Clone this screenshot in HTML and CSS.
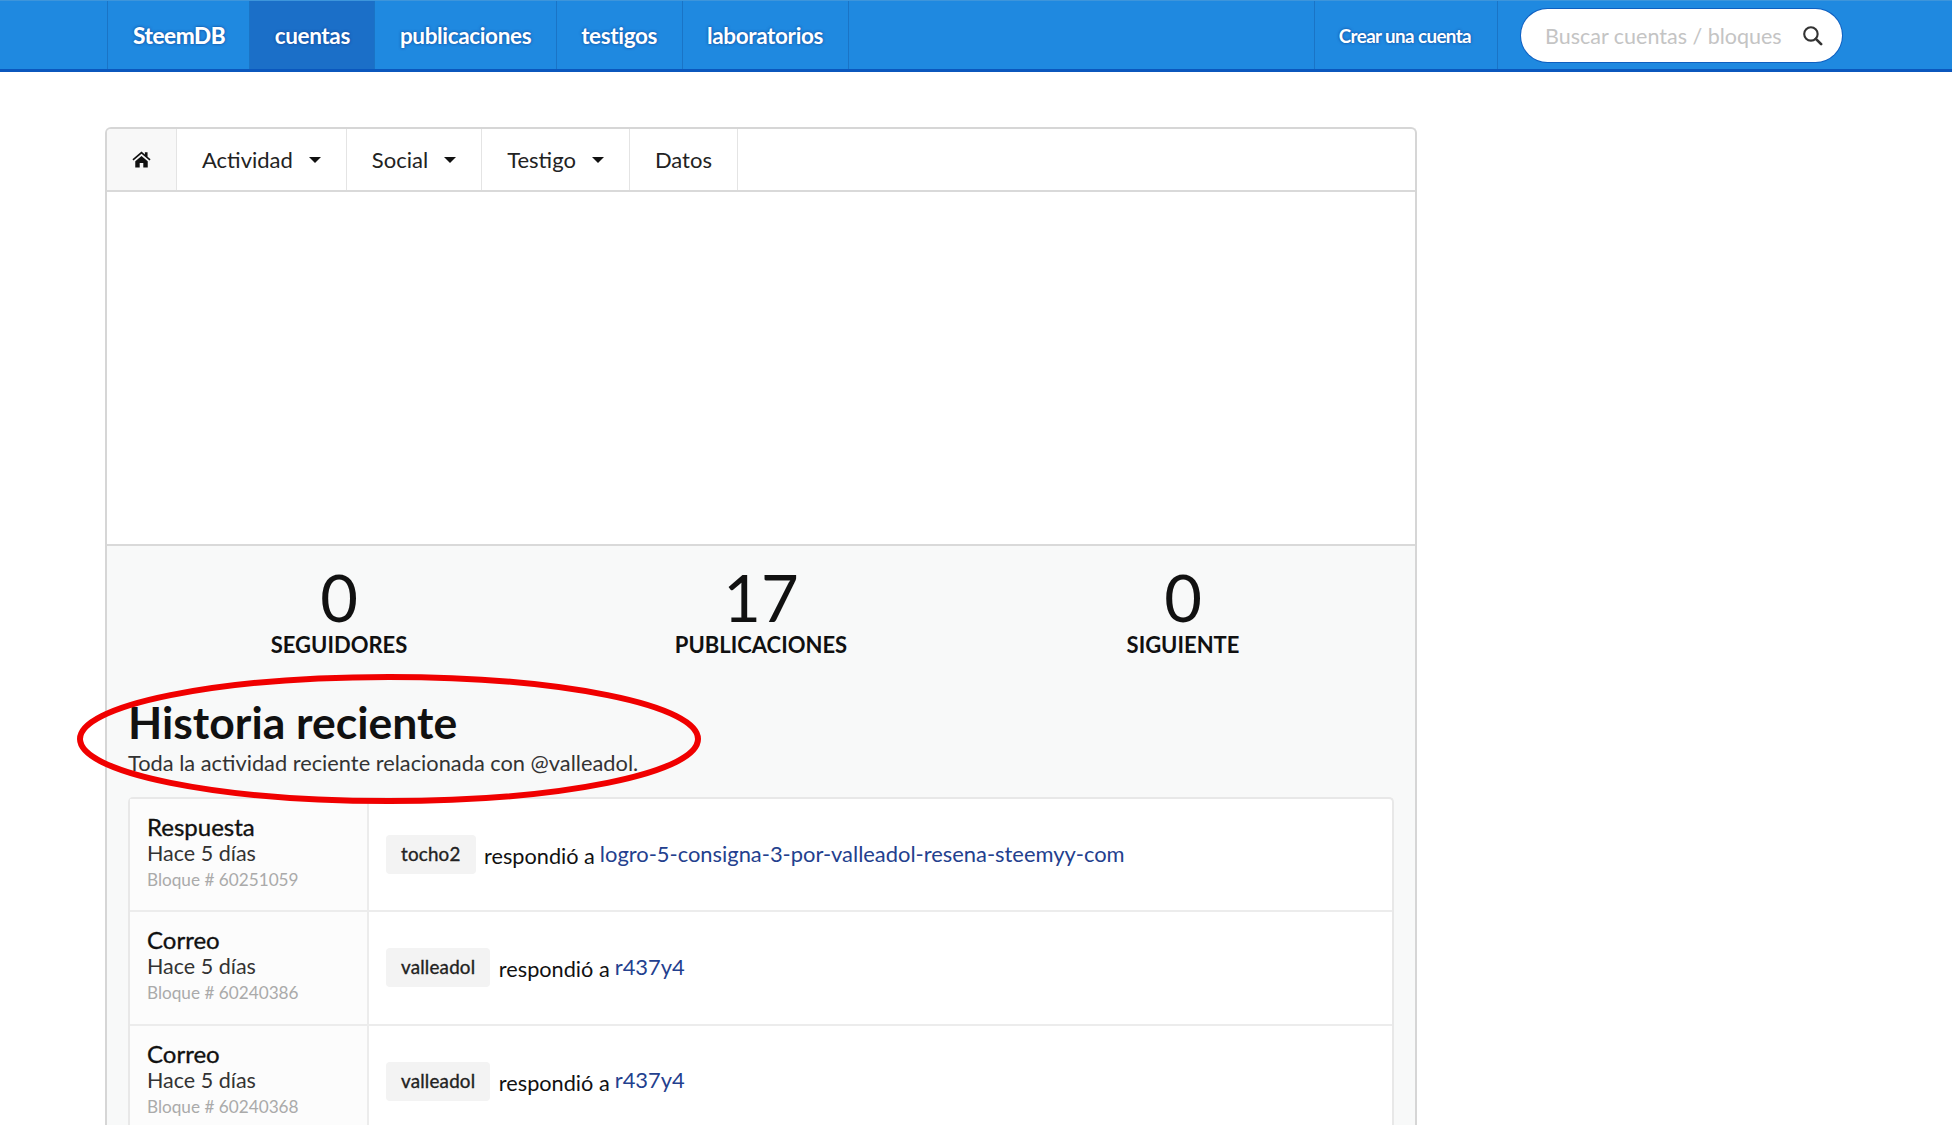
FILE: index.html
```html
<!DOCTYPE html>
<html lang="es">
<head>
<meta charset="utf-8">
<title>SteemDB</title>
<link rel="stylesheet" href="styles.css">
</head>
<body>
<header class="topbar">
  <nav class="menu">
    <a class="menu-item brand">SteemDB</a>
    <a class="menu-item active">cuentas</a>
    <a class="menu-item">publicaciones</a>
    <a class="menu-item">testigos</a>
    <a class="menu-item">laboratorios</a>
  </nav>
  <div class="menu-right">
    <a class="menu-item signup">Crear una cuenta</a>
    <div class="search-cell">
      <div class="search">
        <span class="placeholder">Buscar cuentas / bloques</span>
        <svg class="search-icon" viewBox="0 0 20 20" width="21" height="21"><circle cx="8.5" cy="8.5" r="6.4" fill="none" stroke="#333" stroke-width="2"/><path d="M13.2 13.2l5 5" stroke="#333" stroke-width="2.6" stroke-linecap="round"/></svg>
      </div>
    </div>
  </div>
</header>

<main class="page">
  <section class="card">
    <div class="tabs">
      <a class="tab home">
        <svg viewBox="0 0 20 18" width="19" height="17"><path fill="#111" d="M10 0.5L0.4 8.8l1.1 1.3L10 2.9l8.5 7.2 1.1-1.3L16.4 6V1.4h-2.8v2.2zM3.4 10.8V17.6h4.7v-4.8h3.8v4.8h4.7v-6.8L10 5.2z"/></svg>
      </a>
      <a class="tab">Actividad<i class="caret"></i></a>
      <a class="tab">Social<i class="caret"></i></a>
      <a class="tab">Testigo<i class="caret"></i></a>
      <a class="tab">Datos</a>
    </div>
    <div class="chart"></div>
    <div class="panel">
      <div class="stats">
        <div class="stat"><div class="stat-value">0</div><div class="stat-label">SEGUIDORES</div></div>
        <div class="stat"><div class="stat-value">17</div><div class="stat-label">PUBLICACIONES</div></div>
        <div class="stat"><div class="stat-value">0</div><div class="stat-label">SIGUIENTE</div></div>
      </div>
      <div class="heading">
        <h1>Historia reciente</h1>
        <p>Toda la actividad reciente relacionada con @valleadol.</p>
        <svg class="ring" viewBox="0 0 624 130" width="624" height="130"><ellipse cx="312" cy="65" rx="309" ry="62" fill="none" stroke="#f00000" stroke-width="6"/></svg>
      </div>
      <div class="list">
        <div class="row">
          <div class="meta"><strong>Respuesta</strong><span>Hace 5 días</span><small>Bloque # 60251059</small></div>
          <div class="detail"><span class="label">tocho2</span><span class="verb">respondió a</span><a class="link">logro-5-consigna-3-por-valleadol-resena-steemyy-com</a></div>
        </div>
        <div class="row">
          <div class="meta"><strong>Correo</strong><span>Hace 5 días</span><small>Bloque # 60240386</small></div>
          <div class="detail"><span class="label">valleadol</span><span class="verb">respondió a</span><a class="link">r437y4</a></div>
        </div>
        <div class="row">
          <div class="meta"><strong>Correo</strong><span>Hace 5 días</span><small>Bloque # 60240368</small></div>
          <div class="detail"><span class="label">valleadol</span><span class="verb">respondió a</span><a class="link">r437y4</a></div>
        </div>
      </div>
    </div>
  </section>
</main>
</body>
</html>
```
FILE: styles.css
```css
* { box-sizing: border-box; }
html, body { margin: 0; height: 1125px; overflow: hidden; }
body { background: #fff; color: #1b1c1d; font-family: Lato, "Open Sans", sans-serif; font-size: 22px; }

.topbar {
  display: flex;
  justify-content: space-between;
  height: 72px;
  padding-left: 107px;
  padding-right: 110px;
  background: #1f89e0;
  border-top: 1px solid #3d95db;
  border-bottom: 3px solid #0b57bd;
}
.menu, .menu-right { display: flex; }
.menu { border-left: 1px solid #1a74c6; }
.menu-item {
  display: flex;
  align-items: center;
  padding: 0 24.5px;
  color: #fff;
  font-size: 22.5px;
  font-weight: 700;
  letter-spacing: -0.36px;
  text-shadow: 0 0 3px rgba(0, 40, 120, .75);
  border-right: 1px solid #1a74c6;
}
.brand { font-weight: 900; padding: 0 24px 0 25px; letter-spacing: -0.43px; }
.active { background: #1b6fc8; }
.menu-right { border-left: 1px solid #1a74c6; }
.signup { font-size: 18.8px; padding: 1px 26px 0 23.5px; letter-spacing: -0.6px; }
.search-cell { display: flex; align-items: center; padding: 1px 0 0 23px; }
.search {
  display: flex;
  align-items: center;
  justify-content: space-between;
  width: 321px;
  height: 53px;
  padding: 0 19px 0 24px;
  background: #fff;
  border-radius: 27px;
  box-shadow: 0 0 0 1px #0f5fc0;
}
.placeholder { color: #c4c4c4; font-size: 21.5px; }

.page { padding: 55px 0 0 105px; }
.card {
  width: 1312px;
  background: #fff;
  border: 2px solid #d6d6d6;
  border-bottom: 0;
  border-radius: 6px 6px 0 0;
}
.tabs { display: flex; height: 63px; border-bottom: 2px solid #d9d9d9; }
.tab {
  display: flex;
  align-items: center;
  padding: 0 25px;
  border-right: 1px solid #e4e4e4;
  font-size: 22px;
  color: #222;
}
.home { width: 70px; justify-content: center; padding: 0; background: #f8f8f8; border-top-left-radius: 4px; }
.caret {
  margin-left: 16px;
  border-left: 6px solid transparent;
  border-right: 6px solid transparent;
  border-top: 6px solid #111;
}
.chart { height: 354px; border-bottom: 2px solid #d9d9d9; }
.panel { height: 700px; padding: 0 21px; background: #f8f9f9; }

.stats { display: grid; grid-template-columns: repeat(3, 1fr); padding-top: 16px; }
.stat { text-align: center; }
.stat-value { font-size: 65px; line-height: 70px; color: #111; }
.stat-label { font-size: 22px; line-height: 26px; font-weight: 700; color: #111; }

.heading { position: relative; padding-top: 39px; }
.heading h1 { margin: 0; font-size: 44.5px; line-height: 50px; font-weight: 700; color: #111; }
.heading p { margin: 2px 0 0; font-size: 21.8px; line-height: 28px; color: #333; }
.ring { position: absolute; left: -51px; top: 16px; }

.list {
  margin-top: 20px;
  background: #fff;
  border: 2px solid #e8e8e8;
  border-bottom: 0;
  border-radius: 5px 5px 0 0;
}
.row { display: flex; height: 113.3px; border-bottom: 2px solid #ececec; }
.meta {
  display: flex;
  flex-direction: column;
  justify-content: center;
  width: 239px;
  padding: 0 0 3px 17px;
  background: #fcfcfc;
  border-right: 2px solid #ececec;
}
.meta strong { font-size: 24px; line-height: 27px; font-weight: 400; color: #111; -webkit-text-stroke: .35px #111; }
.meta span { font-size: 21.5px; line-height: 27px; color: #333; }
.meta small { font-size: 17.2px; line-height: 26px; color: #aaa; }
.detail { display: flex; align-items: center; padding-left: 17px; }
.label {
  padding: 0 15px;
  height: 39px;
  line-height: 38px;
  background: #f3f3f3;
  border-radius: 4px;
  font-size: 18.8px;
  letter-spacing: .2px;
  color: #222;
  -webkit-text-stroke: .35px #222;
}
.verb { margin-left: 8.5px; padding-top: 3px; font-size: 21.7px; color: #111; }
.link { margin-left: 5px; margin-top: -3px; font-size: 21.9px; color: #23408e; }
```
